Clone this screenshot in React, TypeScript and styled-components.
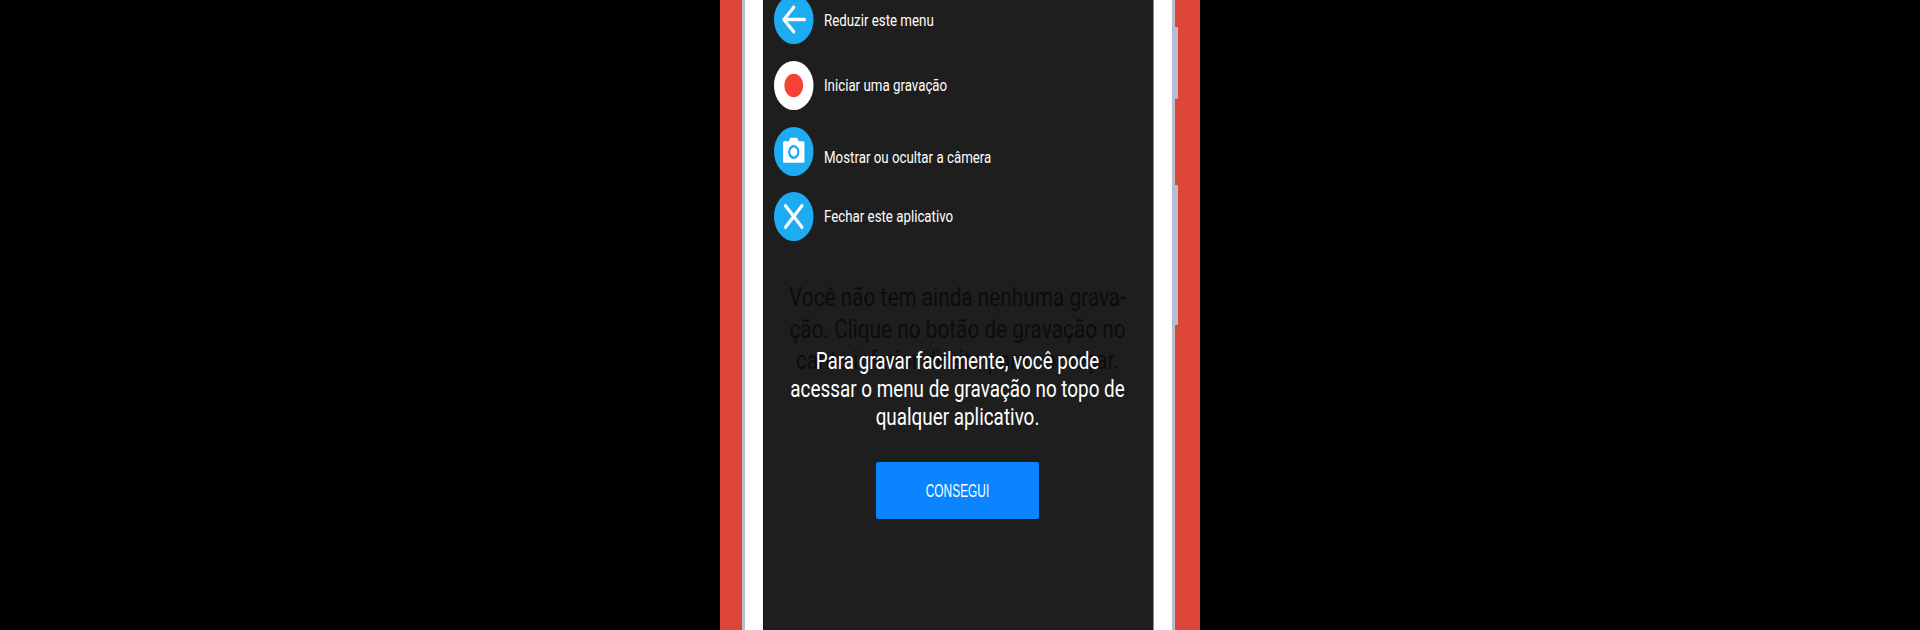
import styled, { createGlobalStyle } from 'styled-components';

const SQUEEZE = 0.806;

const GlobalStyle = createGlobalStyle`
  html, body {
    margin: 0;
    padding: 0;
    background: #000;
    font-family: Roboto, "Liberation Sans", sans-serif;
  }
`;

const Page = styled.div`
  display: flex;
  justify-content: center;
  height: 630px;
  overflow: hidden;
  background: #000;
`;

const Frame = styled.div`
  display: flex;
  box-sizing: border-box;
  width: 480px;
  padding: 0 25px 0 22px;
  background: #dd4636;
`;

const PhoneBody = styled.div`
  position: relative;
  flex: 1;
  display: flex;
  padding: 0 18px;
  background: #fff;
  border-left: 3px solid #b9bdd2;
  border-right: 3px solid #b9bdd2;
`;

const SideKey = styled.div<{ top: number; height: number }>`
  position: absolute;
  right: -6px;
  top: ${props => props.top}px;
  width: 3px;
  height: ${props => props.height}px;
  background: #b9bdd2;
  border-radius: 0 1px 1px 0;
`;

const Screen = styled.div`
  flex: 1;
  display: flex;
  flex-direction: column;
  overflow: hidden;
  background: #1e1e1e;
  border-left: 1px solid #111;
  border-right: 1px solid #8a8a8a;
`;

const MenuList = styled.ul`
  list-style: none;
  margin: -5px 0 0;
  padding: 0 0 0 10px;
  display: grid;
  row-gap: 16.75px;
`;

const MenuRow = styled.li`
  display: flex;
  align-items: center;
  height: 49px;
`;

const IconSvg = styled.svg`
  flex: none;
  display: block;
  width: 39.5px;
  height: 49px;
`;

const MenuLabel = styled.span<{ shift: number }>`
  margin: ${props => props.shift}px 0 0 10.5px;
  color: #fff;
  font-size: 16.5px;
  line-height: 20px;
  white-space: nowrap;
  transform: scaleX(${SQUEEZE});
  transform-origin: left center;
`;

const MessageStack = styled.div`
  display: grid;
  grid-template-columns: minmax(0, 1fr);
  margin-top: 40.75px;
  margin-left: -3px;
`;

const EmptyText = styled.p`
  grid-area: 1 / 1;
  justify-self: center;
  width: 485px;
  margin: 0;
  color: #0c0c0c;
  font-size: 25.8px;
  line-height: 31.5px;
  text-align: center;
  transform: scaleX(${SQUEEZE});
`;

const HintText = styled.p`
  grid-area: 1 / 1;
  justify-self: center;
  width: 485px;
  margin: 65px 0 0;
  color: #fff;
  font-size: 23.4px;
  line-height: 28px;
  text-align: center;
  transform: scaleX(${SQUEEZE});
`;

const GotItButton = styled.button`
  align-self: center;
  width: 163px;
  height: 57px;
  margin: 31px 2px 0 0;
  padding: 2px 0 0;
  border: 0;
  border-radius: 2px;
  background: #0a84ff;
  cursor: pointer;
`;

const ButtonLabel = styled.span`
  display: block;
  color: #fff;
  font-family: inherit;
  font-size: 17.5px;
  font-weight: 500;
  transform: scaleX(0.68);
`;

const BLUE = '#1dabf2';

const Icon: React.FC<{ fill?: string; children: React.ReactNode }> = ({ fill = BLUE, children }) => (
  <IconSvg viewBox='0 0 48 48' preserveAspectRatio='none'>
    <circle cx='24' cy='24' r='24' fill={fill} />
    {children}
  </IconSvg>
);

const App = () => (
  <Page>
    <GlobalStyle />
    <Frame>
      <PhoneBody>
        <SideKey top={27} height={72} />
        <SideKey top={185} height={140} />
        <Screen>
          <MenuList>
            <MenuRow>
              <Icon>
                <path d='M37 24H12M24 12L12 24L24 36' fill='none' stroke='#fff' strokeWidth='3.6' strokeLinecap='round' strokeLinejoin='round' />
              </Icon>
              <MenuLabel shift={2}>Reduzir este menu</MenuLabel>
            </MenuRow>
            <MenuRow>
              <Icon fill='#fff'>
                <circle cx='24' cy='24' r='11.5' fill='#f44336' />
              </Icon>
              <MenuLabel shift={2}>Iniciar uma gravação</MenuLabel>
            </MenuRow>
            <MenuRow>
              <Icon>
                <path d='M12 14H18L20 10.5H28L30 14H36Q37 14 37 15.5V33.5Q37 35 36 35H12Q11 35 11 33.5V15.5Q11 14 12 14Z' fill='#fff' />
                <circle cx='24' cy='24.5' r='5.6' fill='#fff' stroke={BLUE} strokeWidth='2.6' />
              </Icon>
              <MenuLabel shift={13}>Mostrar ou ocultar a câmera</MenuLabel>
            </MenuRow>
            <MenuRow>
              <Icon>
                <path d='M14 13.5L34 34.5M34 13.5L14 34.5' fill='none' stroke='#fff' strokeWidth='3.6' strokeLinecap='round' />
              </Icon>
              <MenuLabel shift={1}>Fechar este aplicativo</MenuLabel>
            </MenuRow>
          </MenuList>
          <MessageStack>
            <EmptyText>
              Você não tem ainda nenhuma grava-<br />
              ção. Clique no botão de gravação no<br />
              canto inferior direito para começar.
            </EmptyText>
            <HintText>
              Para gravar facilmente, você pode<br />
              acessar o menu de gravação no topo de<br />
              qualquer aplicativo.
            </HintText>
          </MessageStack>
          <GotItButton>
            <ButtonLabel>CONSEGUI</ButtonLabel>
          </GotItButton>
        </Screen>
      </PhoneBody>
    </Frame>
  </Page>
);

export default App;
